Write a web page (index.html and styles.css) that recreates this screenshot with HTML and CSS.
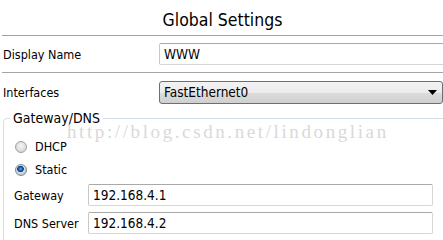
FILE: index.html
```html
<!DOCTYPE html>
<html>
<head>
<meta charset="utf-8">
<link rel="stylesheet" href="styles.css">
</head>
<body>
<div class="page">
  <div class="title">Global Settings</div>
  <div class="row row-name">
    <span class="label">Display Name</span>
    <div class="input wide">WWW</div>
  </div>
  <div class="row row-iface">
    <span class="label">Interfaces</span>
    <div class="select">
      <span>FastEthernet0</span>
      <svg class="arrow" width="9" height="5" viewBox="0 0 9 5"><path d="M0 0H9L4.5 5Z" fill="#000"/></svg>
    </div>
  </div>
  <div class="fieldset">
    <div class="legend">Gateway/DNS</div>
    <div class="watermark">http://blog.csdn.net/lindonglian</div>
    <div class="radio-row dhcp">
      <span class="radio"></span><span>DHCP</span>
    </div>
    <div class="radio-row static">
      <span class="radio checked"></span><span>Static</span>
    </div>
    <div class="field gw">
      <span class="flabel">Gateway</span>
      <div class="input narrow">192.168.4.1</div>
    </div>
    <div class="field dns">
      <span class="flabel">DNS Server</span>
      <div class="input narrow">192.168.4.2</div>
    </div>
  </div>
</div>
</body>
</html>
```
FILE: styles.css
```css
html, body {
  margin: 0;
  padding: 0;
  background: #fff;
  overflow: hidden;
}
body {
  font-family: "DejaVu Sans Condensed", "DejaVu Sans", Verdana, sans-serif;
  font-stretch: condensed;
  font-size: 12.5px;
  color: #000;
  width: 443px;
  height: 240px;
}
.page {
  margin-left: 2px;
  width: 441px;
  height: 240px;
  overflow: hidden;
}
.title {
  height: 36px;
  box-sizing: border-box;
  border-bottom: 1px solid #a4a4a4;
  text-align: center;
  font-size: 17.5px;
  line-height: 40px;
}
.row {
  display: flex;
  align-items: center;
}
.label {
  flex: none;
  width: 156px;
  padding-left: 1px;
}
.row-name {
  height: 37px;
  box-sizing: border-box;
  border-bottom: 1px solid #a4a4a4;
}
.input {
  box-sizing: border-box;
  height: 22px;
  border: 1px solid #d6d6d6;
  border-top-color: #a9a9a9;
  border-left-color: #c8c8c8;
  background: #fff;
  padding-left: 4px;
  font-size: 13.5px;
  line-height: 20px;
  border-radius: 2px;
  flex: none;
}
.wide {
  width: 290px;
}
.row-iface {
  height: 38px;
}
.select {
  box-sizing: border-box;
  width: 284px;
  height: 23px;
  border: 1px solid #6e6e6e;
  border-radius: 3px;
  background: linear-gradient(#f3f3f3, #ebebeb 50%, #dddddd 51%, #cfcfcf);
  display: flex;
  align-items: center;
  justify-content: space-between;
  padding: 0 5px 0 4px;
  font-size: 13.5px;
  flex: none;
}
.arrow {
  display: block;
}
.fieldset {
  position: relative;
  margin-left: 1px;
  margin-top: 7px;
  border: 1px solid #d3dee6;
  border-radius: 4px;
  height: 140px;
  width: 460px;
}
.legend {
  position: absolute;
  top: -9px;
  left: 6px;
  padding: 0 3px;
  background: #fff;
  font-size: 14px;
  line-height: 16px;
}
.watermark {
  position: absolute;
  z-index: 1;
  top: 2px;
  left: 63px;
  font-family: "Liberation Serif", "Times New Roman", serif;
  font-stretch: normal;
  font-size: 19px;
  letter-spacing: 2.6px;
  color: #d9d9d9;
  white-space: nowrap;
  line-height: 22px;
  pointer-events: none;
}
.radio-row {
  display: flex;
  align-items: center;
  height: 23px;
  padding-left: 11px;
  gap: 8px;
}
.dhcp {
  margin-top: 16px;
}
.radio {
  box-sizing: border-box;
  width: 12px;
  height: 12px;
  border-radius: 50%;
  border: 1px solid #a0a0a0;
  background: radial-gradient(circle at 50% 40%, #f6f6f6, #cdcdcd);
}
.radio.checked {
  border-color: #7f8b95;
  background: radial-gradient(circle at 45% 40%, #6fb0ee 0, #1b68b8 1.6px, #0a3f7c 3px, #e3e7eb 3.6px, #c4cad0 5px);
}
.field {
  display: flex;
  align-items: center;
  height: 28px;
  padding-left: 10px;
}
.flabel {
  flex: none;
  width: 74px;
}
.narrow {
  width: 345px;
}
```
